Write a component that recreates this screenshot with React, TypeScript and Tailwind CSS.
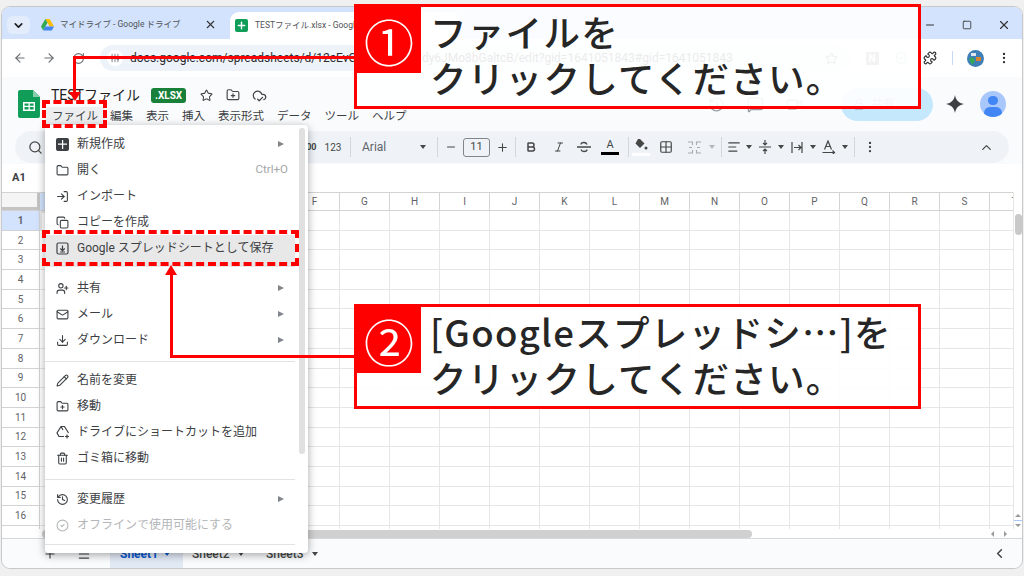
import {
  ArrowLeft,
  ArrowRight,
  RotateCw,
  Star,
  FolderPlus,
  CloudCheck,
  X,
  Minus,
  Plus,
  Square,
  ChevronDown,
  ChevronUp,
  ChevronLeft,
  Search,
  Puzzle,
  EllipsisVertical,
  ShieldCheck,
  History,
  Lock,
  MessageSquare,
  Video,
  Folder,
  Copy,
  UserPlus,
  Mail,
  Download,
  Pencil,
  Trash2,
  CircleCheck,
  LogIn,
  Bold,
  Italic,
  Grid2x2,
  AlignLeft,
  Menu as MenuIcon,
  SlidersVertical,
} from "lucide-react";

const COLUMNS = ["A", "B", "C", "D", "E", "F", "G", "H", "I", "J", "K", "L", "M", "N", "O", "P", "Q", "R", "S", "T"];
const ROWS = Array.from({ length: 17 }, (_, i) => i + 1);
const SHEET_MENU = ["編集", "表示", "挿入", "表示形式", "データ", "ツール", "ヘルプ"];

function SheetsLogo({ size }: { size: number }) {
  return (
    <svg width={size} height={size * 1.27} viewBox="0 0 22 28">
      <path d="M2 0h13l7 7v19a2 2 0 0 1-2 2H2a2 2 0 0 1-2-2V2a2 2 0 0 1 2-2z" fill="#0f9d58" />
      <path d="M15 0l7 7h-7z" fill="#87ceac" />
      <path d="M5 12h12v9H5z" fill="#fff" />
      <path d="M6.500 13.500h4v2.200h-4zM11.800 13.500h3.800v2.200h-3.800zM6.500 17h4v2.500h-4zM11.800 17h3.800v2.500h-3.800z" fill="#0f9d58" />
    </svg>
  );
}

function DriveLogo() {
  return (
    <svg width="13" height="12" viewBox="0 0 13 12" className="shrink-0">
      <path d="M4.300 0h4.400l4.300 7.500H8.600z" fill="#fbbc04" />
      <path d="M4.300 0l2.200 3.800L2.200 11.400 0 7.600z" fill="#34a853" />
      <path d="M4.300 7.500H13L10.800 11.400H2.200z" fill="#4285f4" />
    </svg>
  );
}

// small drawn icons that the icon package has no close match for
function NewIcon() {
  return (
    <svg width="13" height="13" viewBox="0 0 13 13">
      <rect width="13" height="13" rx="2" fill="#3c4043" />
      <path d="M6 2h1.200v9H6zM2 5.500h9v1.200H2z" fill="#fff" />
    </svg>
  );
}

function SaveIcon() {
  return (
    <svg width="13" height="13" viewBox="0 0 13 13" fill="none" stroke="#3c4043" strokeWidth="1.200">
      <rect x="1" y="1" width="11" height="11" rx="1.500" />
      <path d="M6.500 3.500v5M4.300 6.500l2.200 2.200 2.200-2.200M4 10h5" />
    </svg>
  );
}

function ShortcutIcon() {
  return (
    <svg width="14" height="14" viewBox="0 0 14 14" fill="none" stroke="#3c4043" strokeWidth="1.200">
      <path d="M5 1.500h3.500l4 6.500M5 1.500L1 8l2 3.500h5M5 1.500l2 3.500M11 9.500v4M9 11.500h4" />
    </svg>
  );
}

function FillIcon() {
  return (
    <span className="flex flex-col items-center">
      <svg width="14" height="12" viewBox="0 0 14 12" fill="#444746">
        <path d="M4 0l1-1 5.500 5.500L6 9 1.500 4.500z" />
        <circle cx="12" cy="9" r="1.500" />
      </svg>
      <span className="mt-[2px] h-[3px] w-[18px] bg-white" />
    </span>
  );
}

function StrikeIcon() {
  return (
    <svg width="14" height="12" viewBox="0 0 14 12" fill="none" stroke="#444746" strokeWidth="1.300">
      <path d="M0 6h14M10 3.500C9.500 2 8.500 1.500 7 1.500S4 2.200 4 3.500M4 8.500c.5 1.500 1.500 2 3 2s3-.7 3-2" />
    </svg>
  );
}

function MergeIcon() {
  return (
    <svg width="13" height="13" viewBox="0 0 13 13" fill="none" stroke="#a8abad" strokeWidth="1.100">
      <path d="M0 1h4.500v3M0 12h4.500V9M13 1H8.500v3M13 12H8.500V9M1 6.500h3M12 6.500H9" />
    </svg>
  );
}

function ValignIcon() {
  return (
    <svg width="12" height="14" viewBox="0 0 12 14" fill="none" stroke="#444746" strokeWidth="1.200">
      <path d="M0 7h12M6 0v4.500M6 14V9.500M4 3l2 2 2-2M4 11l2-2 2 2" />
    </svg>
  );
}

function WrapIcon() {
  return (
    <svg width="13" height="13" viewBox="0 0 13 13" fill="none" stroke="#444746" strokeWidth="1.200">
      <path d="M1 1v11M11 1v11M3 6.500h7M7.500 4l2.500 2.500L7.500 9" />
    </svg>
  );
}

function RotateIcon() {
  return (
    <svg width="14" height="14" viewBox="0 0 14 14" fill="none" stroke="#444746" strokeWidth="1.200">
      <path d="M2.500 9.500L6 1l3.500 8.500M3.800 6.500h4.400M0.500 12.500h12M10.500 10.500l2 2-2 2" />
    </svg>
  );
}

function Caret({ color = "border-t-[#444746]" }: { color?: string }) {
  return <span className={`inline-block h-0 w-0 shrink-0 border-x-[3.500px] border-t-[4px] border-x-transparent ${color}`} />;
}

function Sep() {
  return <span className="h-[20px] w-px shrink-0 bg-[#d3d6da]" />;
}

function Gap({ w }: { w: number }) {
  return <span className="shrink-0" style={{ width: w }} />;
}

function Slot({ w, children }: { w: number; children?: React.ReactNode }) {
  return (
    <span className="flex shrink-0 items-center justify-center" style={{ width: w }}>
      {children}
    </span>
  );
}

function TabStrip() {
  return (
    <div className="flex h-[32px] items-end bg-[#d3e3fd] pl-[5px]">
      <div className="mb-[5px] flex h-[18px] w-[23px] items-center justify-center rounded-[6px] bg-[#e3ecfb]">
        <ChevronDown size={13} strokeWidth={3} className="text-[#1f1f1f]" />
      </div>
      <div className="mb-[8px] ml-[11px] flex w-[176px] items-center">
        <DriveLogo />
        <span className="ml-[6px] whitespace-nowrap text-[8.500px] text-[#505356]">マイドライブ - Google ドライブ</span>
        <X size={13} strokeWidth={2} className="ml-auto shrink-0 text-[#333]" />
      </div>
      <div className="ml-[13px] flex h-[27px] w-[230px] items-center rounded-t-[9px] bg-white pl-[5px]">
        <span className="flex h-[13px] w-[13px] items-center justify-center rounded-[2px] bg-[#0f9d58]">
          <Plus size={11} strokeWidth={3} className="text-white" />
        </span>
        <span className="ml-[7px] whitespace-nowrap text-[8.500px] text-[#505356]">TESTファイル.xlsx - Google</span>
      </div>
      <div className="mb-[7px] ml-auto flex items-center text-[#333]">
        <Slot w={37}><Minus size={12} /></Slot>
        <Slot w={37}><Square size={10} /></Slot>
        <Slot w={37}><X size={14} /></Slot>
      </div>
    </div>
  );
}

function AddressBar() {
  return (
    <div className="flex h-[38px] items-center bg-white pl-[4px] text-[#6b6f73]">
      <Slot w={28}><ArrowLeft size={14} /></Slot>
      <Slot w={29}><ArrowRight size={14} /></Slot>
      <Slot w={30}><RotateCw size={13} /></Slot>
      <div className="ml-[7px] flex h-[26px] w-[750px] shrink-0 items-center rounded-full bg-[#eef2f9] pl-[7px] pr-[12px]">
        <span className="flex h-[16px] w-[16px] items-center justify-center rounded-full bg-white">
          <SlidersVertical size={10} />
        </span>
        <span className="ml-[7px] overflow-hidden whitespace-nowrap text-[12px] text-[#2b2d30]">
          docs.google.com/spreadsheets/d/12cEvC8mXnq4hT7dy6JMo8bGaltcB/edit?gid=1641051843#gid=1641051843
        </span>
        <Star size={13} className="ml-auto shrink-0" />
      </div>
      <Slot w={44}>
        <span className="flex h-[13px] w-[13px] items-center justify-center bg-[#8a8a8a] text-[10px] font-bold text-white">N</span>
      </Slot>
      <Slot w={14}><ShieldCheck size={14} className="text-[#8fce9f]" /></Slot>
      <Slot w={44}><Puzzle size={14} className="text-[#333]" /></Slot>
      <span className="h-[14px] w-px bg-[#c6d8f5]" />
      <Slot w={44}>
        <svg width="17" height="17" viewBox="0 0 17 17">
          <circle cx="8.500" cy="8.500" r="8.500" fill="#3f7fb8" />
          <path d="M2 9l4-2 2 4-3 4z" fill="#34a853" />
          <path d="M9 7h5v4H9z" fill="#d9822b" />
          <path d="M4 3h5v3H4z" fill="#dfe7ee" />
        </svg>
      </Slot>
      <Slot w={14}><EllipsisVertical size={14} className="text-[#333]" /></Slot>
    </div>
  );
}

function DocHeader() {
  return (
    <div className="flex h-[54px] bg-[#f9fbfd] pl-[16px]">
      <div className="mt-[13px]">
        <SheetsLogo size={22} />
      </div>
      <div className="ml-[5px] mt-[6px] flex flex-col">
        <div className="flex h-[24px] items-center pl-[6px]">
          <span className="whitespace-nowrap text-[14px] text-[#1f1f1f]">TESTファイル</span>
          <span className="ml-[11px] rounded-[3px] bg-[#188038] px-[4px] py-[1px] text-[10px] font-bold leading-[13px] text-white">.XLSX</span>
          <Slot w={40}><Star size={13} className="text-[#444746]" /></Slot>
          <FolderPlus size={14} className="text-[#444746]" />
          <Slot w={38}><CloudCheck size={15} className="text-[#444746]" /></Slot>
        </div>
        <div className="flex h-[20px] items-center">
          <span className="flex h-[20px] w-[60px] items-center justify-center rounded-[4px] bg-[#eceef0] text-[11.500px] text-[#3c4043]">ファイル</span>
          <div className="ml-[5px] flex gap-[13px] whitespace-nowrap text-[11.500px] text-[#3c4043]">
            {SHEET_MENU.map((label) => (
              <span key={label}>{label}</span>
            ))}
          </div>
        </div>
      </div>
      <div className="ml-auto flex items-center pr-[16px]">
        <History size={17} className="text-[#9aa0a6]" />
        <MessageSquare size={17} className="ml-[22px] text-[#9aa0a6]" />
        <Video size={17} className="ml-[22px] text-[#9aa0a6]" />
        <div className="ml-[38px] flex h-[33px] w-[92px] items-center rounded-full bg-[#c6e8fd] pl-[12px] text-[12px] text-[#8a9aa5]">
          <Lock size={12} />
          <span className="ml-[6px]">共有</span>
        </div>
        <svg className="ml-[13px]" width="18" height="18" viewBox="0 0 18 18">
          <path d="M9 0c.8 5 3.600 8 9 9-5.400 1-8.200 4-9 9-.8-5-3.600-8-9-9 5.400-1 8.200-4 9-9z" fill="#3c4043" />
        </svg>
        <span className="relative ml-[16px] block h-[26px] w-[26px] overflow-hidden rounded-full bg-[#a8c7fa]">
          <span className="absolute left-[8px] top-[5px] h-[9px] w-[10px] rounded-full bg-[#4285f4]" />
          <span className="absolute left-[4px] top-[16px] h-[12px] w-[18px] rounded-full bg-[#4285f4]" />
        </span>
      </div>
    </div>
  );
}

function FormatToolbar() {
  return (
    <div className="bg-[#f9fbfd] pb-[1px] pl-[13px] pr-[13px]">
      <div className="flex h-[32px] items-center rounded-full bg-[#eff3f8] pl-[13px] text-[#444746]">
        <Search size={15} className="shrink-0" />
        <Gap w={255} />
        <span className="w-[24px] shrink-0 text-center text-[9px] font-bold leading-[10px]">.00</span>
        <Slot w={22}><span className="text-[10px]">123</span></Slot>
        <Gap w={6} />
        <Sep />
        <span className="ml-[11px] w-[58px] shrink-0 text-[12px] text-[#5f6368]">Arial</span>
        <Caret />
        <Gap w={11} />
        <Sep />
        <Slot w={25}><Minus size={12} /></Slot>
        <span className="flex h-[19px] w-[27px] shrink-0 items-center justify-center rounded-[3px] border border-[#80868b] text-[11px]">11</span>
        <Slot w={25}><Plus size={13} /></Slot>
        <Sep />
        <Slot w={30}><Bold size={12} strokeWidth={3} /></Slot>
        <Slot w={25}><Italic size={12} /></Slot>
        <Slot w={26}><StrikeIcon /></Slot>
        <Slot w={26}>
          <span className="flex flex-col items-center">
            <span className="text-[11px] leading-[11px]">A</span>
            <span className="mt-[2px] h-[3px] w-[18px] bg-black" />
          </span>
        </Slot>
        <Gap w={5} />
        <Sep />
        <Slot w={24}><FillIcon /></Slot>
        <Slot w={26}><Grid2x2 size={14} /></Slot>
        <Slot w={30}><MergeIcon /></Slot>
        <Caret color="border-t-[#b5b8ba]" />
        <Gap w={6} />
        <Sep />
        <Slot w={24}><AlignLeft size={14} /></Slot>
        <Caret />
        <Slot w={26}><ValignIcon /></Slot>
        <Caret />
        <Slot w={26}><WrapIcon /></Slot>
        <Caret />
        <Slot w={26}><RotateIcon /></Slot>
        <Caret />
        <Gap w={6} />
        <Sep />
        <Slot w={30}><EllipsisVertical size={14} /></Slot>
        <ChevronUp size={15} className="ml-auto mr-[15px] shrink-0" />
      </div>
    </div>
  );
}

function SheetGrid() {
  return (
    <div className="relative flex-1 overflow-hidden bg-white">
      <div className="flex h-[19px] border-b border-t border-[#d3d3d3]">
        <div className="w-[38px] shrink-0 border-b-[3px] border-r-[3px] border-[#c4c4c4] bg-[#f5f5f5]" />
        {COLUMNS.map((col) => (
          <div
            key={col}
            className={`flex w-[50px] shrink-0 items-center justify-center border-r border-[#d3d3d3] text-[10px] text-[#5f6368] ${col === "A" ? "bg-[#d3e3fd]" : ""}`}
          >
            {col}
          </div>
        ))}
      </div>
      {ROWS.map((row) => (
        <div key={row} className="flex h-[19.700px]">
          <div
            className={`flex w-[38px] shrink-0 items-center justify-center border-b border-r border-[#d3d3d3] text-[10px] text-[#5f6368] ${row === 1 ? "bg-[#d3e3fd] font-bold text-[#1f1f1f]" : ""}`}
          >
            {row}
          </div>
          {COLUMNS.map((col) => (
            <div
              key={col}
              className={`w-[50px] shrink-0 border-b border-r border-[#e6e6e6] text-[12px] leading-[18px] ${row === 1 && col === "A" ? "border-2 border-[#1a73e8] pl-[3px]" : ""}`}
            >
              {row === 1 && col === "A" ? "TEST" : ""}
            </div>
          ))}
        </div>
      ))}
      {/* vertical scroll gutter */}
      <div className="absolute bottom-[10px] right-0 top-0 flex w-[9px] flex-col border-l border-[#e6e6e6] bg-white">
        <div className="ml-px mt-[22px] h-[21px] w-[7px] rounded-full bg-[#c9c9c9]" />
        <div className="mt-auto flex flex-col items-center gap-[3px] pb-[2px]">
          <span className="h-0 w-0 border-x-[3px] border-b-[3px] border-x-transparent border-b-[#9a9a9a]" />
          <span className="h-px w-full bg-[#a8c7fa]" />
          <span className="h-0 w-0 border-x-[3px] border-t-[3px] border-x-transparent border-t-[#9a9a9a]" />
        </div>
      </div>
      {/* horizontal scrollbar */}
      <div className="absolute bottom-0 left-0 right-0 flex h-[10px] items-center border-b border-[#d8d8d8] bg-white">
        <div className="ml-[40px] h-[8px] w-[710px] rounded-full bg-[#d0d0d0]" />
        <div className="ml-auto mr-[10px] flex">
          <Slot w={13}><span className="h-0 w-0 border-y-[3px] border-r-[3px] border-y-transparent border-r-[#9a9a9a]" /></Slot>
          <Slot w={13}><span className="h-0 w-0 border-y-[3px] border-l-[3px] border-y-transparent border-l-[#9a9a9a]" /></Slot>
        </div>
      </div>
    </div>
  );
}

function SheetTabs() {
  return (
    <div className="flex h-[29px] items-center rounded-b-[8px] bg-[#f9fbfd] text-[12px] text-[#444746]">
      <div className="flex w-[100px] shrink-0 items-center gap-[20px] pl-[41px]">
        <Plus size={14} />
        <MenuIcon size={14} />
      </div>
      <div className="ml-[8px] flex h-full w-[73px] items-center gap-[6px] bg-[#e1e9f5] pl-[10px] font-bold text-[#0b57d0]">
        Sheet1
        <Caret color="border-t-[#0b57d0]" />
      </div>
      <div className="flex w-[74px] items-center gap-[8px] pl-[9px] font-medium">
        Sheet2
        <Caret />
      </div>
      <div className="flex items-center gap-[8px] pl-[9px] font-medium">
        Sheet3
        <Caret />
      </div>
      <ChevronLeft size={15} strokeWidth={2.500} className="ml-auto mr-[15px]" />
    </div>
  );
}

type MenuRowProps = {
  icon: React.ReactNode;
  label: string;
  arrow?: boolean;
  hint?: string;
  disabled?: boolean;
};

function MenuRow({ icon, label, arrow, hint, disabled }: MenuRowProps) {
  return (
    <div className={`flex h-[26px] items-center pl-[11px] pr-[24px] text-[12px] ${disabled ? "text-[#b4b6b8]" : "text-[#3c4043]"}`}>
      <span className="flex w-[21px] shrink-0 justify-start">{icon}</span>
      <span className="whitespace-nowrap">{label}</span>
      {arrow && <span className="ml-auto h-0 w-0 border-y-[3.500px] border-l-[6px] border-y-transparent border-l-[#80868b]" />}
      {hint && <span className="-mr-[4px] ml-auto text-[11.500px] text-[#a4a6a8]">{hint}</span>}
    </div>
  );
}

function FileMenu() {
  return (
    <div className="absolute left-[45px] top-[125px] h-[428px] w-[263px] rounded-[4px] bg-white pt-[6px] shadow-[0_2px_8px_rgba(0,0,0,0.35)]">
      <MenuRow icon={<NewIcon />} label="新規作成" arrow />
      <MenuRow icon={<Folder size={13} />} label="開く" hint="Ctrl+O" />
      <MenuRow icon={<LogIn size={13} />} label="インポート" />
      <MenuRow icon={<Copy size={13} />} label="コピーを作成" />
      <div className="w-[250px] bg-[#e8e8e8] pb-[6px]">
        <MenuRow icon={<SaveIcon />} label="Google スプレッドシートとして保存" />
      </div>
      <div className="h-[8px]" />
      <MenuRow icon={<UserPlus size={13} />} label="共有" arrow />
      <MenuRow icon={<Mail size={13} />} label="メール" arrow />
      <MenuRow icon={<Download size={13} />} label="ダウンロード" arrow />
      <div className="mr-[13px] mt-[8px] h-px bg-[#e3e3e3]" />
      <div className="h-[5px]" />
      <MenuRow icon={<Pencil size={13} />} label="名前を変更" />
      <MenuRow icon={<FolderPlus size={13} />} label="移動" />
      <MenuRow icon={<ShortcutIcon />} label="ドライブにショートカットを追加" />
      <MenuRow icon={<Trash2 size={13} />} label="ゴミ箱に移動" />
      <div className="mr-[13px] mt-[8px] h-px bg-[#e3e3e3]" />
      <div className="h-[6px]" />
      <MenuRow icon={<History size={13} />} label="変更履歴" arrow />
      <MenuRow icon={<CircleCheck size={13} />} label="オフラインで使用可能にする" disabled />
      <div className="mr-[13px] mt-[6px] h-px bg-[#e3e3e3]" />
      {/* menu scrollbar */}
      <div className="absolute right-[3px] top-[3px] h-[326px] w-[6px] rounded-full bg-[#dfe0df]" />
    </div>
  );
}

function Callout({ top, num, first }: { top: number; num: string; first: string }) {
  return (
    <div className="absolute left-[354px] flex h-[105px] w-[567px] border-[3px] border-[#ff0000] bg-white/90 font-['Noto_Sans_CJK_JP',sans-serif]" style={{ top }}>
      <div className="flex h-[66px] w-[64px] shrink-0 items-center justify-center self-start bg-[#ff0000] text-[50px] font-normal leading-none text-white">
        {num}
      </div>
      <div className="ml-[9px] whitespace-nowrap pt-[2px] text-[36.500px] font-medium leading-[46px] tracking-[1.300px] text-[#262626]">
        <div>{first}</div>
        <div>クリックしてください。</div>
      </div>
    </div>
  );
}

function Annotations() {
  return (
    <>
      {/* arrow 1 */}
      <div className="absolute left-[73px] top-[56px] h-[42px] w-[282px] border-l-[3px] border-t-[3px] border-[#ff0000]" />
      <div className="absolute left-[69px] top-[92px] h-0 w-0 border-x-[6px] border-t-[9px] border-x-transparent border-t-[#ff0000]" />
      {/* arrow 2 */}
      <div className="absolute left-[170px] top-[270px] h-[88px] w-[185px] border-b-[3px] border-l-[3px] border-[#ff0000]" />
      <div className="absolute left-[165px] top-[265px] h-0 w-0 border-x-[6px] border-b-[10px] border-x-transparent border-b-[#ff0000]" />
      {/* dashed targets */}
      <div className="absolute left-[42px] top-[100px] h-[28px] w-[65px] border-[4px] border-dashed border-[#ff0000]" />
      <div className="absolute left-[42px] top-[230px] h-[36px] w-[257px] border-[4px] border-dashed border-[#ff0000]" />
      <Callout top={4} num="①" first="ファイルを" />
      <Callout top={304} num="②" first="[Googleスプレッドシ…]を" />
    </>
  );
}

export default function App() {
  return (
    <div className="relative h-[576px] w-[1024px] overflow-hidden bg-[#f0f0f0] pt-[6px] font-['Roboto','Noto_Sans_CJK_JP',sans-serif]">
      <div className="mx-px flex h-[563px] flex-col overflow-hidden rounded-[9px] border border-[#c8c8c8] bg-white">
        <TabStrip />
        <AddressBar />
        <DocHeader />
        <FormatToolbar />
        <div className="flex h-[28px] items-center bg-white pl-[10px] text-[11px] font-bold text-[#3c4043]">A1</div>
        <SheetGrid />
        <SheetTabs />
      </div>
      <FileMenu />
      <Annotations />
    </div>
  );
}
